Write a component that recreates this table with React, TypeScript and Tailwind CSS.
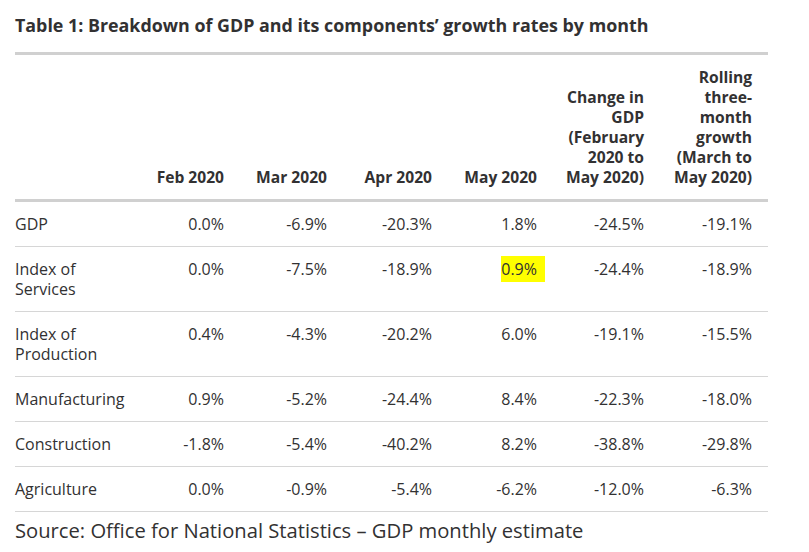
import React from "react";

type Row = { label: string; values: string[]; highlight?: number };

const rows: Row[] = [
  { label: "GDP", values: ["0.0%", "-6.9%", "-20.3%", "1.8%", "-24.5%", "-19.1%"] },
  { label: "Index of Services", values: ["0.0%", "-7.5%", "-18.9%", "0.9%", "-24.4%", "-18.9%"], highlight: 3 },
  { label: "Index of Production", values: ["0.4%", "-4.3%", "-20.2%", "6.0%", "-19.1%", "-15.5%"] },
  { label: "Manufacturing", values: ["0.9%", "-5.2%", "-24.4%", "8.4%", "-22.3%", "-18.0%"] },
  { label: "Construction", values: ["-1.8%", "-5.4%", "-40.2%", "8.2%", "-38.8%", "-29.8%"] },
  { label: "Agriculture", values: ["0.0%", "-0.9%", "-5.4%", "-6.2%", "-12.0%", "-6.3%"] },
];

const headers = [
  "Feb 2020",
  "Mar 2020",
  "Apr 2020",
  "May 2020",
  "Change in GDP (February 2020 to May 2020)",
  "Rolling three-month growth (March to May 2020)",
];

export default function App() {
  return (
    <div
      className="min-h-[552px] w-[809px] bg-white text-[#323132]"
      style={{ fontFamily: '"Open Sans", "Liberation Sans", sans-serif' }}
    >
      <div className="ml-[15px] w-[753px]">
        <h2 className="pt-[13px] pb-[14px] text-[17.85px] font-bold leading-[25px] border-b-[3px] border-[#d0d0d0]">
          Table 1: Breakdown of GDP and its components’ growth rates by month
        </h2>
        <table className="w-[753px] table-fixed border-collapse text-[16px] leading-5">
          <colgroup>
            <col className="w-[135px]" />
            <col className="w-[90px]" />
            <col className="w-[103px]" />
            <col className="w-[105px]" />
            <col className="w-[105px]" />
            <col className="w-[107px]" />
            <col className="w-[108px]" />
          </colgroup>
          <thead>
            <tr>
              <th className="border-b-[3px] border-[#d0d0d0] py-3 pr-4 text-left align-bottom text-[15.6px] font-bold"></th>
              {headers.map((h) => (
                <th
                  key={h}
                  className="border-b-[3px] border-[#d0d0d0] py-3 pr-4 text-right align-bottom text-[15.6px] font-bold"
                >
                  {h}
                </th>
              ))}
            </tr>
          </thead>
          <tbody>
            {rows.map((r) => (
              <tr key={r.label}>
                <td className="border-b border-[#d6d6d6] py-3 pr-4 text-left align-top">{r.label}</td>
                {r.values.map((v, i) => (
                  <td
                    key={i}
                    className="border-b border-[#d6d6d6] py-3 pr-4 text-right align-top"
                  >
                    {r.highlight === i ? (
                      <span className="-mr-2 -my-[3px] inline-block bg-[#ffff00] py-[3px] pr-2">{v}</span>
                    ) : (
                      v
                    )}
                  </td>
                ))}
              </tr>
            ))}
          </tbody>
        </table>
        <p className="pt-[5px] text-[20.2px] leading-[27px]">
          Source: Office for National Statistics – GDP monthly estimate
        </p>
      </div>
    </div>
  );
}
